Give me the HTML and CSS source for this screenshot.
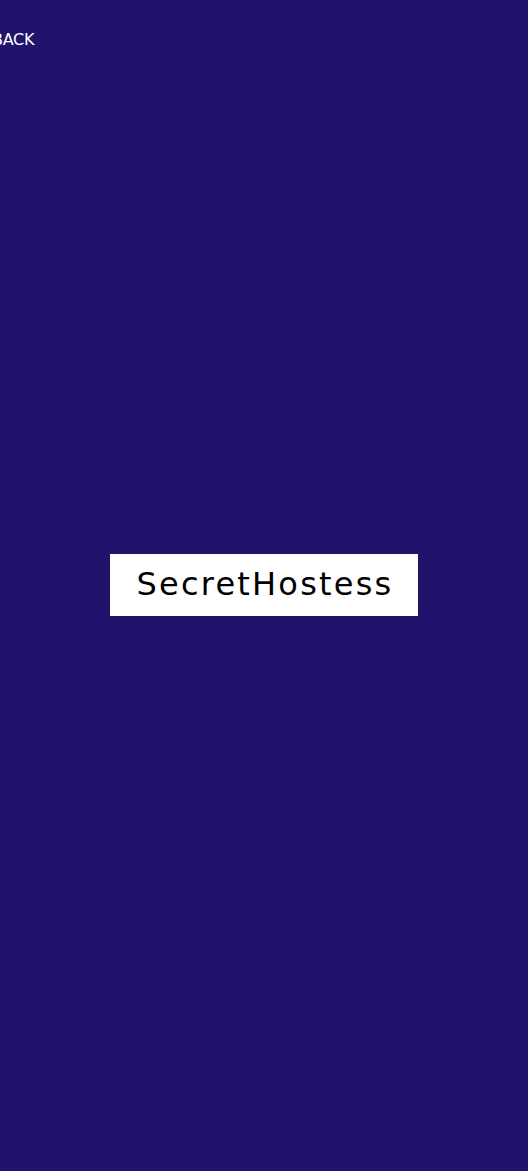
FILE: index.html
```html
<!DOCTYPE html>
<html>
<head>
<meta charset="utf-8">
<link rel="stylesheet" href="styles.css">
</head>
<body>
<div class="page">
  <a class="back">BACK</a>
  <div class="center">
    <div class="logo">SecretHostess</div>
  </div>
</div>
</body>
</html>
```
FILE: styles.css
```css
html, body {
  margin: 0;
  padding: 0;
  height: 100%;
  background: #21126b;
}
.page {
  position: relative;
  height: 1171px;
  display: flex;
  flex-direction: column;
  font-family: "DejaVu Sans", sans-serif;
}
.back {
  position: absolute;
  top: 31px;
  left: -8px;
  color: #ffffff;
  font-size: 16px;
  line-height: 18px;
  letter-spacing: -0.3px;
}
.center {
  flex: 1;
  display: flex;
  align-items: center;
  justify-content: center;
}
.logo {
  background: #ffffff;
  color: #000000;
  width: 308px;
  height: 62px;
  margin-bottom: 2px;
  box-sizing: border-box;
  display: flex;
  align-items: center;
  justify-content: center;
  font-size: 32px;
  letter-spacing: 2.2px;
  padding-left: 2px;
  padding-bottom: 1px;
}
```
